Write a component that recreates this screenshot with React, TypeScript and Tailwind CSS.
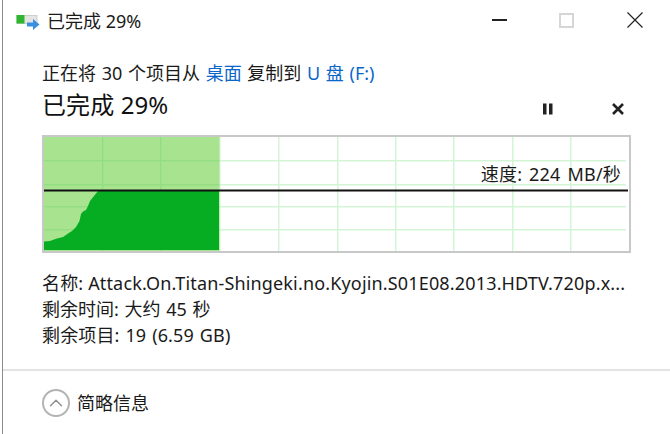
import { ChevronUp } from "lucide-react";

const FONT = "font-['Noto_Sans','Noto_Sans_CJK_SC',sans-serif]";

const verticals = [102, 160, 219, 278, 337, 395, 453, 512, 570];
const horizontals = [160, 184, 206, 229];
const curve =
  "M44 250 L44 241.5 L50 241 L54 239.5 L57 238.5 L63 237 L68 233.5 L72 231 L76 227 L79.5 221 L81 214 L83 211.5 L86 210 L88 206 L90 201 L94 196 L98 191 L219 191 L219 250 Z";

const Chart = () => (
  <div className="relative mt-[14px] ml-[39px] h-[118px] w-[589px]">
    <svg viewBox="42 135 589 118" className="block h-[118px] w-[589px]">
      <rect x="43" y="136" width="587" height="116" fill="#fff" stroke="#c8c8c8" strokeWidth="2" />
      {verticals.map((x) => (
        <rect key={x} x={x} y="137" width="1.5" height="114" fill="#d4f4d6" />
      ))}
      {horizontals.map((y) => (
        <rect key={y} x="44" y={y} width="582" height="1.5" fill="#d4f4d6" />
      ))}
      <rect x="44" y="137" width="175.5" height="114" fill="#a8e48f" />
      {verticals.slice(0, 2).map((x) => (
        <rect key={x} x={x} y="137" width="1.5" height="114" fill="#93de82" />
      ))}
      {horizontals.map((y) => (
        <rect key={y} x="44" y={y} width="175.5" height="1.5" fill="#93de82" />
      ))}
      <path d={curve} fill="#06ad23" />
      <rect x="44" y="189.5" width="584" height="2" fill="#111" />
    </svg>
    <span className="absolute right-[10px] top-[27px] text-[18px] leading-[24px] tracking-[0.2px] text-[#1a1a1a] [word-spacing:2px]">速度: 224 MB/秒</span>
  </div>
);

const TitleBar = () => (
  <div className="flex h-[40px] items-center pl-[13px]">
    <svg viewBox="0 0 24 20" className="h-[20px] w-[24px]">
      <rect x="1" y="5.5" width="20" height="8" fill="#e4e4e4" stroke="#cfcfcf" />
      <rect x="0.5" y="5" width="8" height="8.5" fill="#2fb52f" />
      <path d="M11 12.5h6V9l6.5 5.5-6.5 5.5v-3.5h-6z" fill="#3a8fe0" />
    </svg>
    <span className="mt-[2px] ml-[7px] text-[18px] text-[#1a1a1a]">已完成 29%</span>
    <div className="ml-auto flex items-center pr-[27px]">
      <span className="h-[2px] w-[15px] bg-[#222]" />
      <span className="ml-[52px] h-[15px] w-[15px] border-2 border-[#d6d6d6]" />
      <svg viewBox="0 0 16 16" className="ml-[53px] h-[16px] w-[16px]" stroke="#222" strokeWidth="1.2">
        <path d="M0.5 0.5 L15.5 15.5 M15.5 0.5 L0.5 15.5" />
      </svg>
    </div>
  </div>
);

export default function App() {
  return (
    <div className={`h-[434px] w-[670px] overflow-hidden bg-white pl-[2px] ${FONT}`}>
      <div className="h-full border-l border-[#8a8a8a]">
        <TitleBar />
        <div className="mt-[21px] ml-[39px] text-[18px] leading-[24px] text-[#1a1a1a] [word-spacing:1px]">
          正在将 30 个项目从 <span className="text-[#0a66c8]">桌面</span> 复制到 <span className="text-[#0a66c8]">U 盘 (F:)</span>
        </div>
        <div className="mt-[4px] flex h-[32px] items-center pl-[39px] pr-[46px]">
          <span className="text-[24px] leading-[30px] tracking-[0.1px] text-[#111]">已完成 29%</span>
          <svg viewBox="0 0 12 12" className="mt-[8px] ml-auto h-[12px] w-[12px]" fill="#222">
            <rect x="1" y="0.5" width="3.5" height="11" />
            <rect x="7" y="0.5" width="3.5" height="11" />
          </svg>
          <svg viewBox="0 0 12 12" className="mt-[8px] ml-[58px] h-[12px] w-[12px]" stroke="#222" strokeWidth="2.6">
            <path d="M1 1 L11 11 M11 1 L1 11" />
          </svg>
        </div>
        <Chart />
        <div className="mt-[17px] ml-[39px] w-[590px] text-[18px] leading-[26px] text-[#1a1a1a]">
          <div className="truncate tracking-[0.16px]">名称: Attack.On.Titan-Shingeki.no.Kyojin.S01E08.2013.HDTV.720p.x...</div>
          <div className="[word-spacing:1px]">剩余时间: 大约 45 秒</div>
          <div className="tracking-[0.15px] [word-spacing:1px]">剩余项目: 19 (6.59 GB)</div>
        </div>
        <div className="mt-[21px] flex h-[66px] items-center border-t-2 border-[#e3e3e3] pl-[39px]">
          <span className="flex h-[28px] w-[28px] items-center justify-center rounded-full border-2 border-[#b4b4b4]">
            <ChevronUp size={22} strokeWidth={1.4} className="text-[#8a8a8a]" />
          </span>
          <span className="ml-[7px] text-[18px] text-[#1a1a1a]">简略信息</span>
        </div>
      </div>
    </div>
  );
}
